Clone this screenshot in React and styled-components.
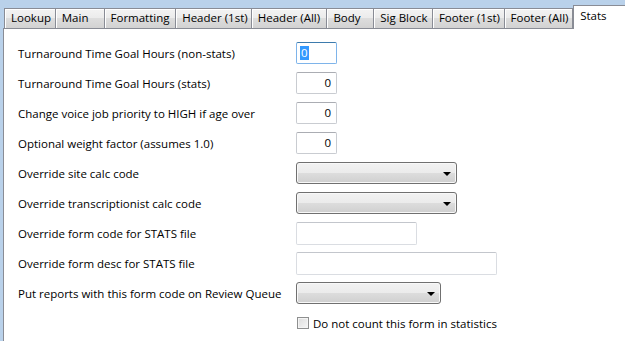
import React from "react";
import styled, { createGlobalStyle } from "styled-components";

const GlobalStyle = createGlobalStyle`
  html, body {
    margin: 0;
    padding: 0;
    background: #b9d1ea;
  }
  body {
    font-family: "Open Sans", "Noto Sans", sans-serif;
    font-size: 11.5px;
    color: #000;
  }
`;

const TABS = [
  { label: "Lookup", w: 51 },
  { label: "Main", w: 49 },
  { label: "Formatting", w: 72 },
  { label: "Header (1st)", w: 76 },
  { label: "Header (All)", w: 76 },
  { label: "Body", w: 47 },
  { label: "Sig Block", w: 59 },
  { label: "Footer (1st)", w: 72 },
  { label: "Footer (All)", w: 70 },
  { label: "Stats", w: 52, selected: true },
];

/* ---- tab strip ---- */

const Window = styled.div`
  width: 625px;
  height: 341px;
  overflow: hidden;
  display: flex;
  flex-direction: column;
`;

const TabStrip = styled.div`
  height: 28px;
  display: flex;
  align-items: flex-end;
  padding-left: 4px;
  flex-shrink: 0;
`;

const Tab = styled.div`
  box-sizing: border-box;
  width: ${(p) => p.$w}px;
  height: ${(p) => (p.$selected ? 24 : 20)}px;
  border: 1px solid #898c95;
  border-bottom: none;
  border-right: ${(p) => (p.$last ? "1px solid #898c95" : "none")};
  background: ${(p) =>
    p.$selected
      ? "#fff"
      : "linear-gradient(#f3f3f3, #ebebeb 50%, #dddddd 50%, #d2d2d2)"};
  box-shadow: ${(p) => (p.$selected ? "none" : "inset 1px 1px 0 #fff")};
  padding: ${(p) => (p.$selected ? "2px 0 0 6px" : "1px 0 0 6px")};
  white-space: nowrap;
  line-height: 16px;
  position: relative;
  z-index: ${(p) => (p.$selected ? 1 : 0)};
  margin-bottom: ${(p) => (p.$selected ? "-1px" : "0")};
`;

/* ---- page ---- */

const Panel = styled.div`
  flex: 1;
  margin-left: 3px;
  background: #fff;
  border-top: 1px solid #898c95;
  border-left: 1px solid #898c95;
`;

const Form = styled.div`
  display: grid;
  grid-template-columns: 278px 1fr;
  grid-auto-rows: 22px;
  row-gap: 8px;
  align-items: center;
  padding: 13px 0 0 14px;
`;

const Label = styled.div`
  grid-column: 1;
  white-space: nowrap;
`;

const NumBox = styled.div`
  grid-column: 2;
  box-sizing: border-box;
  width: 41px;
  height: 22px;
  border: 1px solid ${(p) => (p.$focused ? "#7eb4ea" : "#c9ccd1")};
  border-top-color: ${(p) => (p.$focused ? "#3d7bad" : "#abadb3")};
  border-radius: 2px;
  background: #fff;
  display: flex;
  align-items: center;
  justify-content: ${(p) => (p.$focused ? "flex-start" : "flex-end")};
  padding: 0 5px 0 3px;
  line-height: 14px;
`;

const Selected = styled.span`
  background: #3399ff;
  color: #fff;
  padding: 0 1px;
`;

const TextBox = styled.div`
  grid-column: 2;
  box-sizing: border-box;
  width: ${(p) => p.$w}px;
  height: 23px;
  border: 1px solid #dadde2;
  border-top-color: #c3c6cc;
  border-radius: 2px;
  background: #fff;
`;

const Select = styled.div`
  grid-column: 2;
  box-sizing: border-box;
  width: ${(p) => p.$w}px;
  height: 22px;
  border: 1px solid #707070;
  border-radius: 3px;
  background: linear-gradient(#f2f2f2, #ebebeb 50%, #dddddd 50%, #cfcfcf);
  box-shadow: inset 0 0 0 1px #f8f8f8;
  display: flex;
  align-items: center;
  justify-content: flex-end;
  padding-right: 5px;
`;

const Arrow = styled.span`
  width: 0;
  height: 0;
  border-left: 4px solid transparent;
  border-right: 4px solid transparent;
  border-top: 4px solid #000;
  margin-top: 1px;
`;

const CheckRow = styled.label`
  grid-column: 2;
  display: flex;
  align-items: center;
  gap: 4px;
  margin-left: 1px;
  white-space: nowrap;
`;

const CheckBox = styled.span`
  box-sizing: border-box;
  width: 12px;
  height: 12px;
  border: 1px solid #8e8f8f;
  background: linear-gradient(135deg, #dcdcdc, #f6f6f6);
  box-shadow: inset 0 0 0 1px #f4f4f4;
`;

export default function App() {
  return (
    <>
      <GlobalStyle />
      <Window>
        <TabStrip>
          {TABS.map((t, i) => (
            <Tab
              key={t.label}
              $w={t.w}
              $selected={t.selected}
              $last={i === TABS.length - 2}
            >
              {t.label}
            </Tab>
          ))}
        </TabStrip>
        <Panel>
          <Form>
            <Label>Turnaround Time Goal Hours (non-stats)</Label>
            <NumBox $focused>
              <Selected>0</Selected>
            </NumBox>

            <Label>Turnaround Time Goal Hours (stats)</Label>
            <NumBox>0</NumBox>

            <Label>Change voice job priority to HIGH if age over</Label>
            <NumBox>0</NumBox>

            <Label>Optional weight factor (assumes 1.0)</Label>
            <NumBox>0</NumBox>

            <Label>Override site calc code</Label>
            <Select $w={161}>
              <Arrow />
            </Select>

            <Label>Override transcriptionist calc code</Label>
            <Select $w={161}>
              <Arrow />
            </Select>

            <Label>Override form code for STATS file</Label>
            <TextBox $w={121} />

            <Label>Override form desc for STATS file</Label>
            <TextBox $w={201} />

            <Label>Put reports with this form code on Review Queue</Label>
            <Select $w={145}>
              <Arrow />
            </Select>

            <CheckRow>
              <CheckBox />
              Do not count this form in statistics
            </CheckRow>
          </Form>
        </Panel>
      </Window>
    </>
  );
}
